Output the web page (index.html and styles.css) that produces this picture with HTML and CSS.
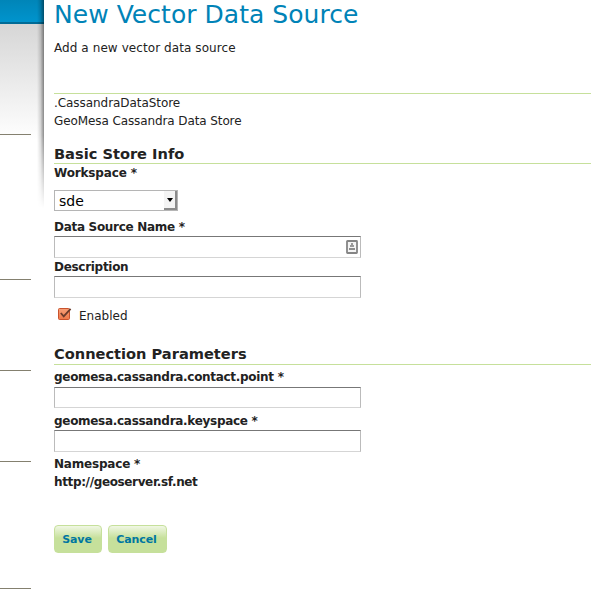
FILE: index.html
```html
<!DOCTYPE html>
<html lang="en">
<head>
<meta charset="utf-8">
<title>New Vector Data Source</title>
<link rel="stylesheet" href="styles.css">
</head>
<body>
<aside class="sidebar">
  <div class="banner"></div>
  <div class="nav">
    <section class="nav-group first"></section>
    <section class="nav-group tall"></section>
    <section class="nav-group"></section>
    <section class="nav-group"></section>
    <section class="nav-group last"></section>
  </div>
  <div class="edge"></div>
</aside>
<main class="page">
  <h1>New Vector Data Source</h1>
  <p class="intro">Add a new vector data source</p>
  <div class="store">
    <p class="store-type">.CassandraDataStore</p>
    <p class="store-name">GeoMesa Cassandra Data Store</p>
  </div>
  <form>
    <h2>Basic Store Info</h2>
    <label class="workspace-label">Workspace *</label>
    <div class="select"><span>sde</span><i class="drop"></i></div>
    <label>Data Source Name *</label>
    <div class="field">
      <svg width="12" height="14" viewBox="0 0 12 14"><rect x="1" y="1" width="10" height="12" rx=".5" fill="#f4f4f4" stroke="#858585" stroke-width="1.8"/><path d="M5 3h2v2h1v2H4V5h1z" fill="#999"/><path d="M3 8h6v2H3z" fill="#8d8d8d"/></svg>
    </div>
    <label>Description</label>
    <div class="field"></div>
    <div class="check">
      <svg width="15" height="14" viewBox="0 0 15 14"><defs><linearGradient id="g" x2="0" y2="1"><stop stop-color="#f7a078"/><stop offset="1" stop-color="#f07848"/></linearGradient></defs><rect x="1.5" y="1.5" width="11" height="11" rx="1" fill="url(#g)" stroke="#c9532d"/><path d="M3.8 6 6.7 9.3 13.6 1.8" fill="none" stroke="#6b3b2b" stroke-width="1.8"/></svg>
      <span>Enabled</span>
    </div>
    <h2 class="connection">Connection Parameters</h2>
    <label class="contact-label">geomesa.cassandra.contact.point *</label>
    <div class="field short"></div>
    <label class="keyspace-label">geomesa.cassandra.keyspace *</label>
    <div class="field"></div>
    <label class="namespace-label">Namespace *</label>
    <p class="namespace">http://geoserver.sf.net</p>
    <div class="actions">
      <button type="button" class="save">Save</button>
      <button type="button" class="cancel">Cancel</button>
    </div>
  </form>
</main>
</body>
</html>
```
FILE: styles.css
```css
* { box-sizing: border-box; }
body {
  margin: 0;
  height: 595px;
  overflow: hidden;
  display: flex;
  background: #fff;
  color: #222;
  font: 12px/18px "DejaVu Sans", sans-serif;
}
h1, h2, p { margin: 0; white-space: nowrap; }
.sidebar { position: relative; width: 44px; height: 595px; flex: none; }
.banner {
  height: 24px;
  background: linear-gradient(#0085b8, #0094cd 22px, #006b96 22px);
}
.nav {
  height: 571px;
  background: linear-gradient(#d6d6d6, #fff 116px);
}
.nav-group { width: 31px; height: 91px; border-bottom: 1px solid #84806f; }
.nav-group.first { height: 111px; }
.nav-group.tall { height: 145px; }
.nav-group.last { height: 127px; }
.edge {
  position: absolute;
  top: 0;
  right: 0;
  width: 7px;
  height: 208px;
  background: linear-gradient(90deg, rgba(0,0,0,0), rgba(0,0,0,.14) 50%, rgba(0,0,0,.45));
  -webkit-mask-image: linear-gradient(#000 65%, transparent);
  mask-image: linear-gradient(#000 65%, transparent);
}
.page { flex: 1; min-width: 0; padding-left: 10px; }
h1 {
  height: 30px;
  color: #0083b7;
  font-size: 25px;
  font-weight: normal;
  line-height: 30px;
  letter-spacing: .04px;
}
.intro { margin-top: 9px; letter-spacing: .08px; }
.store { margin-top: 36px; border-top: 1px solid #c6e09b; }
.store-type { letter-spacing: -.06px; }
.store-name { letter-spacing: -.1px; }
h2 {
  height: 20px;
  margin-top: 14px;
  border-bottom: 1px solid #c6e09b;
  font-size: 14.6px;
  line-height: 20px;
}
label {
  display: block;
  height: 18px;
  font-weight: bold;
  letter-spacing: -.3px;
  white-space: nowrap;
}
.workspace-label { letter-spacing: -.15px; }
.select {
  display: flex;
  justify-content: space-between;
  width: 124px;
  height: 21px;
  margin: 8px 0 7px;
  padding-left: 4px;
  border: 1px solid #b5b5b5;
  color: #000;
  font-size: 14px;
  line-height: 20px;
}
.drop {
  position: relative;
  width: 13px;
  height: 19px;
  background: #f4f4f4;
  border-right: 2px solid #8b8b8b;
  border-bottom: 2px solid #8b8b8b;
}
.drop::after {
  content: "";
  position: absolute;
  left: 3px;
  top: 7px;
  border: solid transparent;
  border-width: 4px 3.5px 0;
  border-top-color: #000;
}
.field {
  display: flex;
  align-items: center;
  justify-content: flex-end;
  width: 307px;
  height: 22px;
  padding-right: 2px;
  border: 1px solid;
  border-color: #777 #bbb #d5d5d5 #bbb;
}
.field.short { height: 21px; }
.check { display: flex; height: 18px; margin-top: 8px; padding-left: 3px; }
.check svg { margin-top: 1px; }
.check span { margin-left: 7px; line-height: 20px; }
.connection { height: 20px; margin-top: 21px; line-height: 18px; }
.contact-label { height: 19px; margin-top: 3px; }
.keyspace-label { margin-top: 4px; }
.namespace-label { margin-top: 3px; letter-spacing: -.2px; }
.namespace { font-weight: bold; letter-spacing: -.36px; }
.actions { display: flex; gap: 6px; margin-top: 34px; }
button {
  width: 48px;
  height: 28px;
  padding: 0 2px 0 0;
  border: 1px solid #c6e09b;
  border-radius: 4px;
  background: linear-gradient(#f0f7e4, #c6e09b 12px);
  color: #0076a1;
  font: bold 11px/28px "DejaVu Sans", sans-serif;
  letter-spacing: -.1px;
}
.cancel { width: 59px; }
```
